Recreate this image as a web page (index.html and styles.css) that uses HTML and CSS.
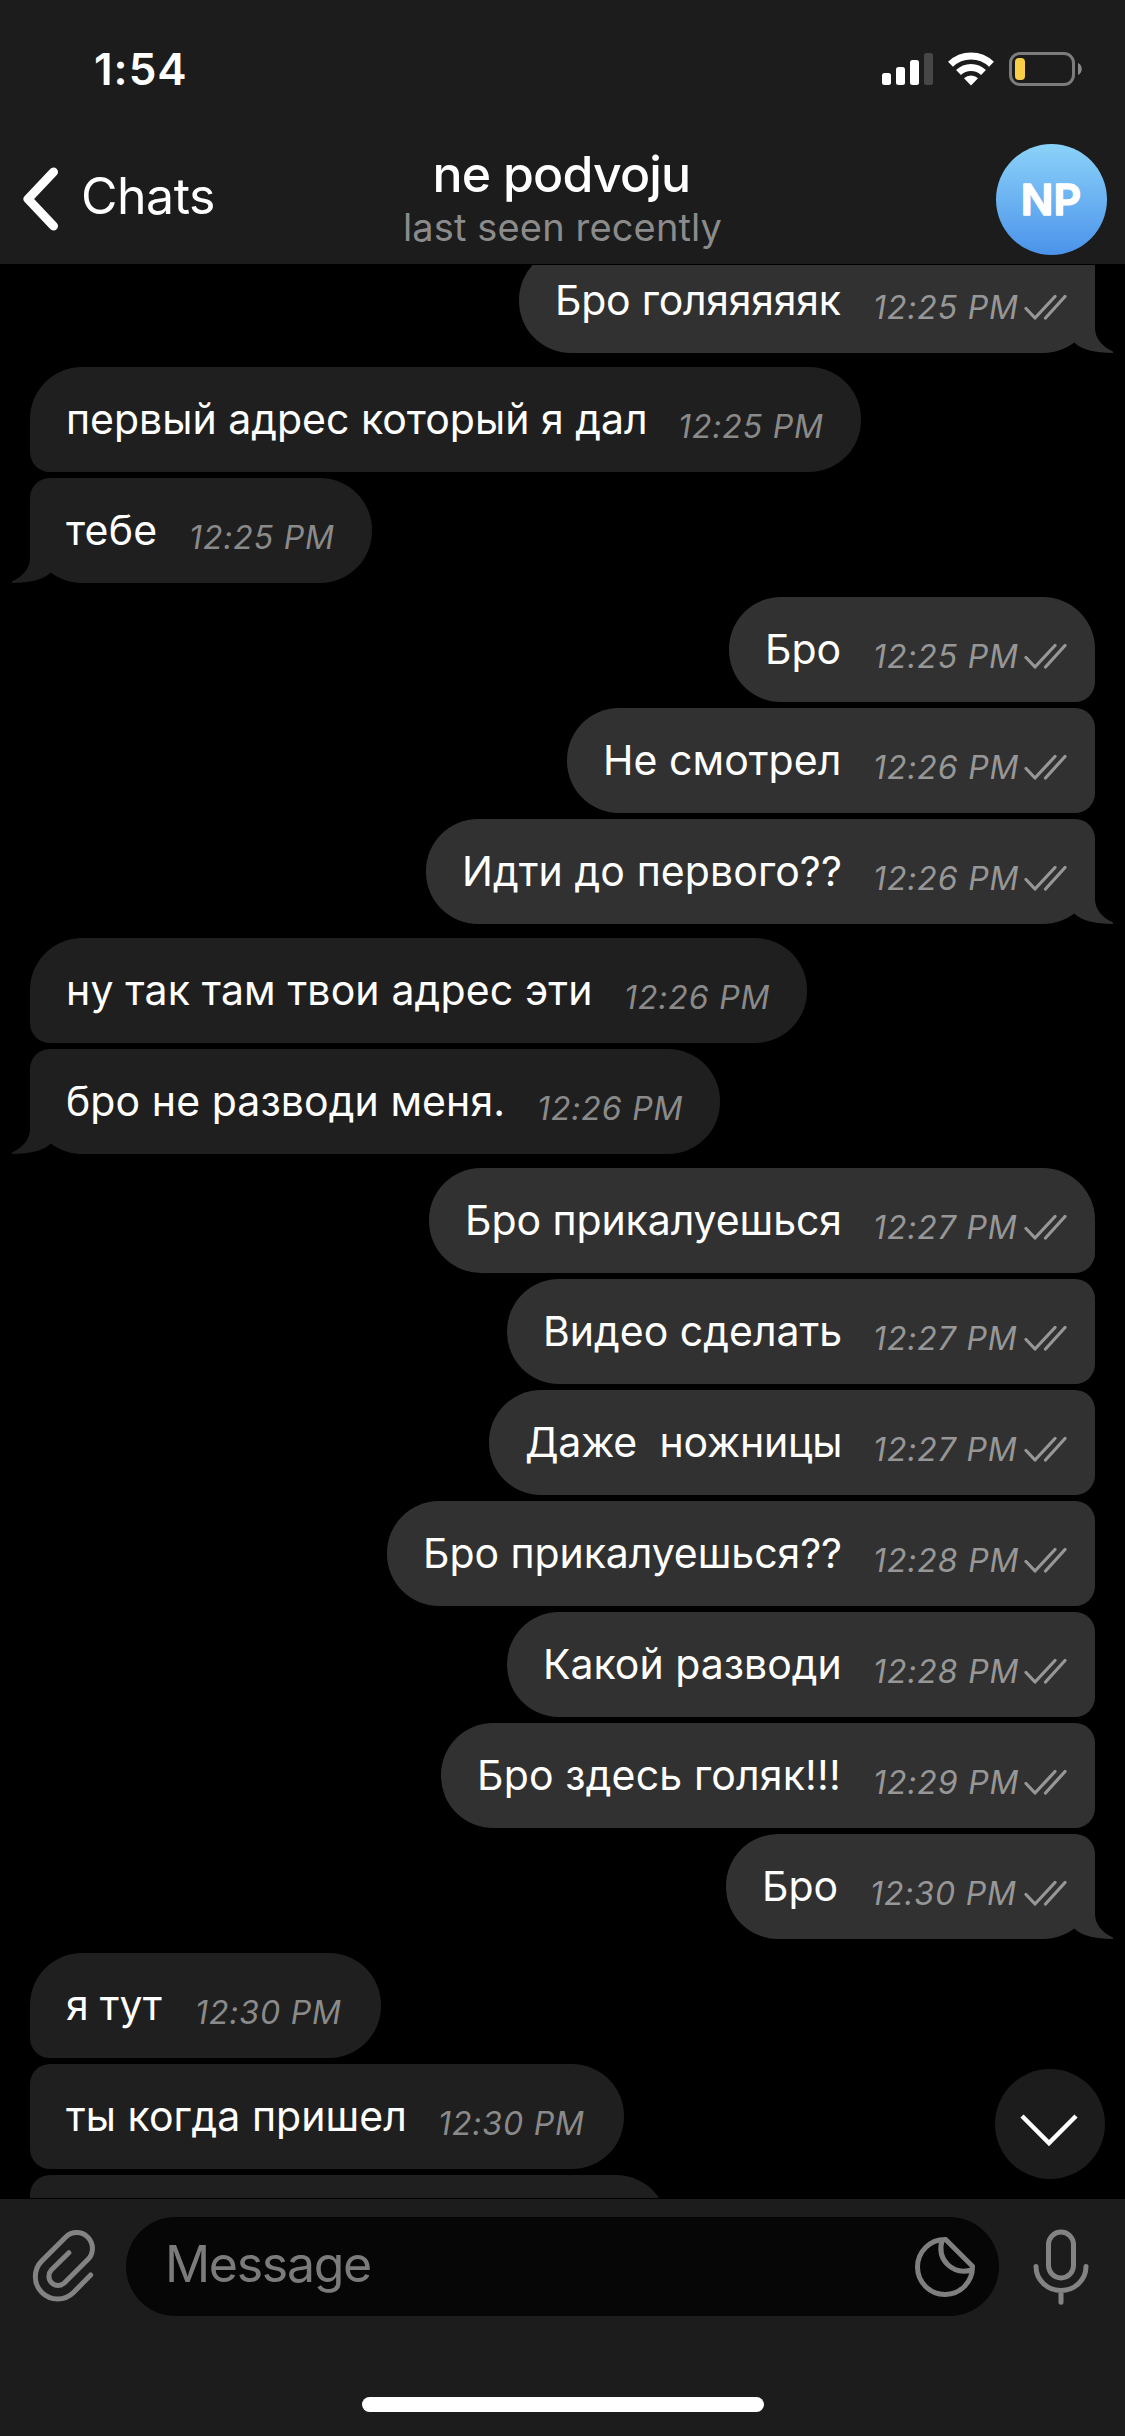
FILE: index.html
```html
<!DOCTYPE html>
<html lang="ru">
<head>
<meta charset="utf-8">
<title>ne podvoju</title>
<link rel="stylesheet" href="styles.css">
</head>
<body>
<svg class="defs" width="0" height="0" aria-hidden="true">
  <symbol id="checks" viewBox="0 0 44 30"><path d="M2 17.500 11 27 31 5.500M21.500 27 41 5.500" fill="none" stroke="currentColor" stroke-width="3.200" stroke-linecap="round" stroke-linejoin="round"/></symbol>
  <symbol id="tail" viewBox="0 0 48 52"><path d="M9 0H30V27C30 37 37 45.500 48 50.500V52C30 52 17 49 9 41.300Z" fill="currentColor"/></symbol>
</svg>
<div class="screen">
  <header class="header">
    <div class="status">
      <span class="clock">1:54</span>
      <div class="indicators">
        <svg width="51" height="34" viewBox="0 0 51 34"><g fill="#fff"><rect x="0" y="21" width="9" height="12" rx="2.500"/><rect x="14" y="15" width="9" height="18" rx="2.500"/><rect x="28" y="8" width="9" height="25" rx="2.500"/></g><rect x="42" y="1" width="9" height="32" rx="2.500" fill="#474747"/></svg>
        <svg class="wifi" width="46" height="34" viewBox="0 0 46 34"><g fill="none" stroke="#fff" stroke-width="7"><path d="M2.500 12.300A29.500 29.500 0 0 1 43.500 12.300"/><path d="M10.500 20.500A18 18 0 0 1 35.500 20.500"/></g><path d="M23 33.500 16 26.300A10 10 0 0 1 30 26.300Z" fill="#fff"/></svg>
        <svg class="battery" width="74" height="34" viewBox="0 0 74 34"><rect x="1.500" y="1.500" width="63" height="31" rx="9.500" fill="none" stroke="#7c7c7c" stroke-width="3"/><rect x="6" y="6" width="10" height="22" rx="4" fill="#f8cf46"/><path d="M69 11C74 13 74 21 69 23Z" fill="#8a8a8a"/></svg>
      </div>
    </div>
    <nav class="nav">
      <a class="back"><svg width="40" height="66" viewBox="0 0 40 66"><path d="M33.500 6 8 33 33.500 60" fill="none" stroke="#fff" stroke-width="9" stroke-linecap="round" stroke-linejoin="round"/></svg><span>Chats</span></a>
      <div class="peer"><h1>ne podvoju</h1><p>last seen recently</p></div>
      <div class="avatar"><svg width="111" height="111" viewBox="0 0 111 111"><text x="55" y="71" text-anchor="middle">NP</text></svg></div>
    </nav>
  </header>

  <main class="chat">
    <div class="group out">
      <div class="msg last"><span class="text" style="width:287px;letter-spacing:-.25px">Бро голяяяяяк</span><time>12:25 PM</time><svg class="checks"><use href="#checks"/></svg><svg class="tail"><use href="#tail"/></svg></div>
    </div>
    <div class="group in">
      <div class="msg first"><span class="text" style="width:581px">первый адрес который я дал</span><time>12:25 PM</time></div>
      <div class="msg last"><span class="text" style="width:92px;letter-spacing:.2px">тебе</span><time>12:25 PM</time><svg class="tail"><use href="#tail"/></svg></div>
    </div>
    <div class="group out">
      <div class="msg first"><span class="text" style="width:77px">Бро</span><time>12:25 PM</time><svg class="checks"><use href="#checks"/></svg></div>
      <div class="msg"><span class="text" style="width:239px;letter-spacing:.05px">Не смотрел</span><time>12:26 PM</time><svg class="checks"><use href="#checks"/></svg></div>
      <div class="msg last"><span class="text" style="width:380px;letter-spacing:.08px">Идти до первого??</span><time>12:26 PM</time><svg class="checks"><use href="#checks"/></svg><svg class="tail"><use href="#tail"/></svg></div>
    </div>
    <div class="group in">
      <div class="msg first"><span class="text" style="width:527px;letter-spacing:.14px">ну так там твои адрес эти</span><time>12:26 PM</time></div>
      <div class="msg last"><span class="text" style="width:440px;letter-spacing:.08px">бро не разводи меня.</span><time>12:26 PM</time><svg class="tail"><use href="#tail"/></svg></div>
    </div>
    <div class="group out">
      <div class="msg first"><span class="text" style="width:377px;letter-spacing:-.08px">Бро прикалуешься</span><time>12:27 PM</time><svg class="checks"><use href="#checks"/></svg></div>
      <div class="msg"><span class="text" style="width:299px">Видео сделать</span><time>12:27 PM</time><svg class="checks"><use href="#checks"/></svg></div>
      <div class="msg"><span class="text" style="width:317px;letter-spacing:-.22px">Даже  ножницы</span><time>12:27 PM</time><svg class="checks"><use href="#checks"/></svg></div>
      <div class="msg"><span class="text" style="width:419px;letter-spacing:-.07px">Бро прикалуешься??</span><time>12:28 PM</time><svg class="checks"><use href="#checks"/></svg></div>
      <div class="msg"><span class="text" style="width:299px">Какой разводи</span><time>12:28 PM</time><svg class="checks"><use href="#checks"/></svg></div>
      <div class="msg"><span class="text" style="width:365px;letter-spacing:.15px">Бро здесь голяк!!!</span><time>12:29 PM</time><svg class="checks"><use href="#checks"/></svg></div>
      <div class="msg last"><span class="text" style="width:77px">Бро</span><time class="wide">12:30 PM</time><svg class="checks"><use href="#checks"/></svg><svg class="tail"><use href="#tail"/></svg></div>
    </div>
    <div class="group in">
      <div class="msg first"><span class="text" style="width:98px;letter-spacing:-.2px">я тут</span><time class="wide">12:30 PM</time></div>
      <div class="msg"><span class="text" style="width:341px;letter-spacing:.05px">ты когда пришел</span><time class="wide">12:30 PM</time></div>
      <div class="msg"><span class="text" style="width:385px"></span><time class="wide"></time></div>
    </div>
    <div class="jump"><svg width="60" height="34" viewBox="0 0 60 34"><path d="M3 3 30 30 57 3" fill="none" stroke="#fff" stroke-width="4.500"/></svg></div>
  </main>

  <footer class="composer">
    <div class="bar">
      <svg class="clip" width="100" height="100" viewBox="0 0 300 300"><path d="M212 180 160.400 232.400A67 67 0 0 1 65.600 137.600L136.600 66.600A47.200 47.200 0 0 1 203.400 133.600L133 204A27.600 27.600 0 0 1 94 165L146.500 113" fill="none" stroke="#838383" stroke-width="15" stroke-linecap="round"/></svg>
      <div class="field"><span>Message</span>
        <svg width="70" height="70" viewBox="30 48 210 210"><g fill="none" stroke="#7f7f7f" stroke-width="15" stroke-linejoin="round"><path d="M137 70.500A82.500 82.500 0 1 0 217.500 151Z"/><path d="M126 74C110 132 157 178 216 162"/></g></svg>
      </div>
      <svg class="mic" width="80" height="80" viewBox="363 34.500 240 240"><g fill="none" stroke="#838383" stroke-width="15" stroke-linecap="round"><rect x="445.500" y="49.500" width="75" height="138" rx="37.500"/><path d="M408 153A75 72 0 0 0 558 153M483 227V260"/></g></svg>
    </div>
    <div class="home"></div>
  </footer>
</div>
</body>
</html>
```
FILE: styles.css
```css
* { box-sizing: border-box; margin: 0; padding: 0; }
body { background: #000; color: #fff; font-family: Inter, "Liberation Sans", sans-serif; }
svg { display: block; flex: none; }
.defs { position: absolute; }
.screen { width: 1125px; height: 2436px; display: flex; flex-direction: column; overflow: hidden; }

.header { height: 265px; flex: none; background: #1c1c1c; border-bottom: 1px solid #000; }
.status { height: 138px; display: flex; justify-content: space-between; padding: 0 42px 0 94px; }
.clock { font-size: 44px; font-weight: 600; line-height: 138px; letter-spacing: 1px; }
.indicators { display: flex; align-items: center; }
.wifi { margin-left: 15px; }
.battery { margin-left: 15px; }
.nav { height: 126px; display: grid; grid-template-columns: 1fr auto 1fr; }
.back { display: flex; padding-left: 20px; height: 121px; align-items: center; font-size: 50px; letter-spacing: -.5px; }
.back span { margin: -6px 0 0 21px; }
.peer { padding-top: 6px; text-align: center; }
.peer h1 { font-size: 50px; font-weight: 500; line-height: 60px; letter-spacing: -.8px; padding-right: 2px; }
.peer p { font-size: 38px; line-height: 46px; letter-spacing: .15px; color: #8b8b8b; }
.avatar { justify-self: end; width: 111px; height: 111px; margin: 6px 18px 0 0; border-radius: 50%; background: linear-gradient(#8bd2f9, #4b93ea); }
.avatar text { font: 600 43px Inter, sans-serif; fill: #fff; stroke: #fff; stroke-width: 1.5px; stroke-linejoin: round; }

.chat { position: relative; flex: 1; min-height: 0; overflow: hidden; display: flex; flex-direction: column; gap: 14px; padding: 0 30px; }
.chat .group:first-child { margin-top: -17px; }
.group { flex: none; display: flex; flex-direction: column; gap: 6px; }
.group.out { align-items: flex-end; }
.group.in { align-items: flex-start; }
.msg { position: relative; display: flex; height: 105px; padding-left: 36px; }
.out .msg { padding-right: 27px; background: #313131; color: #979797; border-radius: 52px 20px 20px 52px; }
.in .msg { padding-right: 32px; background: #1f1f1f; color: #8a8a8a; border-radius: 20px 52px 52px 20px; }
.out .first { border-top-right-radius: 52px; }
.in .first { border-top-left-radius: 52px; }
.out .last { border-bottom-right-radius: 52px; }
.in .last { border-bottom-left-radius: 52px; }
.text { font-size: 41px; line-height: 104px; color: #fff; white-space: pre; }
.msg time { width: 151px; margin-left: 31px; font-size: 32px; font-style: italic; line-height: 120px; letter-spacing: .85px; white-space: nowrap; }
.msg time.wide { width: 154px; }
.checks { width: 44px; height: 30px; margin-top: 43px; }
.tail { position: absolute; bottom: 0; width: 48px; height: 52px; }
.out .tail { right: -18px; color: #313131; }
.in .tail { left: -18px; color: #1f1f1f; transform: scaleX(-1); }
.jump { position: absolute; right: 20px; bottom: 19px; width: 110px; height: 110px; border-radius: 50%; background: #1c1c1c; display: flex; justify-content: center; padding-top: 44px; }
.jump svg { margin-left: -3px; }

.composer { height: 238px; flex: none; background: #1c1c1c; border-top: 1px solid #000; padding-top: 18px; }
.bar { height: 99px; display: flex; align-items: center; padding-left: 20px; }
.clip { margin: -3px 6px 0 0; }
.field { width: 873px; height: 99px; border-radius: 50px; background: #060606; display: flex; align-items: center; justify-content: space-between; padding: 0 19px 0 39px; }
.field span { font-size: 50px; line-height: 60px; margin-top: -5px; letter-spacing: -1.3px; color: #7b7b7b; }
.mic { margin-left: 22px; }
.home { width: 402px; height: 15px; margin: 81px auto 0; border-radius: 8px; background: #fff; }
```
